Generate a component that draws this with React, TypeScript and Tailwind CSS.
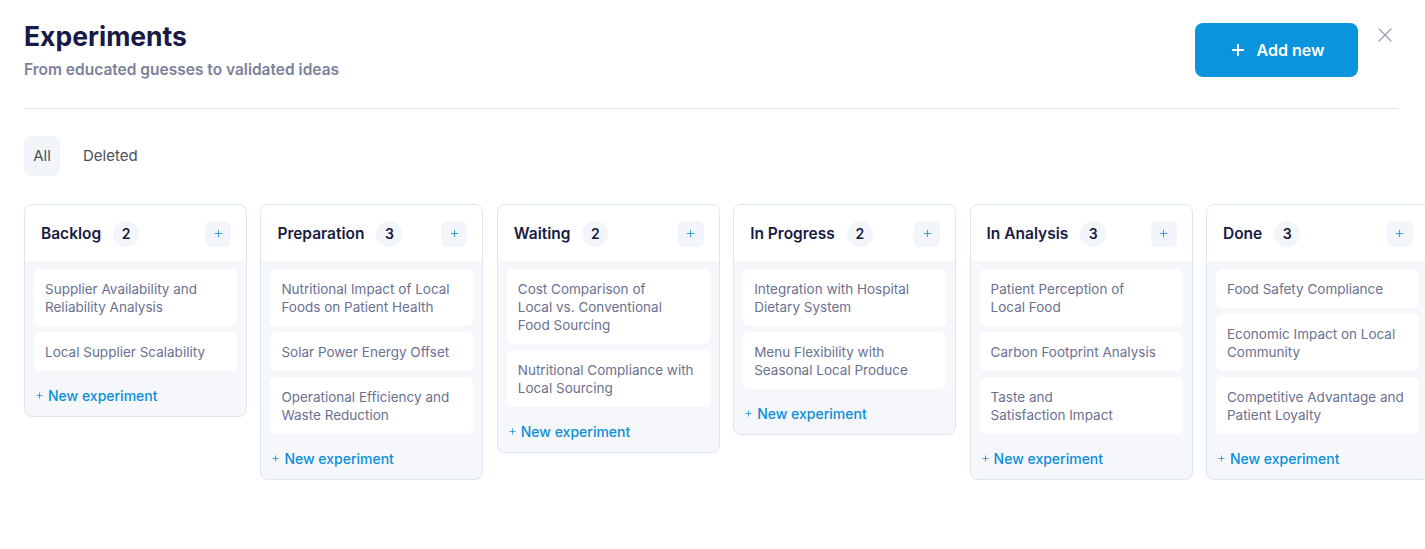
import React from "react";

type Col = { title: string; items: string[][] };

const columns: Col[] = [
  { title: "Backlog", items: [["Supplier Availability and", "Reliability Analysis"], ["Local Supplier Scalability"]] },
  {
    title: "Preparation",
    items: [
      ["Nutritional Impact of Local", "Foods on Patient Health"],
      ["Solar Power Energy Offset"],
      ["Operational Efficiency and", "Waste Reduction"],
    ],
  },
  {
    title: "Waiting",
    items: [
      ["Cost Comparison of", "Local vs. Conventional", "Food Sourcing"],
      ["Nutritional Compliance with", "Local Sourcing"],
    ],
  },
  {
    title: "In Progress",
    items: [
      ["Integration with Hospital", "Dietary System"],
      ["Menu Flexibility with", "Seasonal Local Produce"],
    ],
  },
  {
    title: "In Analysis",
    items: [["Patient Perception of", "Local Food"], ["Carbon Footprint Analysis"], ["Taste and", "Satisfaction Impact"]],
  },
  {
    title: "Done",
    items: [
      ["Food Safety Compliance"],
      ["Economic Impact on Local", "Community"],
      ["Competitive Advantage and", "Patient Loyalty"],
    ],
  },
];

function Plus({ className, sw = 2 }: { className?: string; sw?: number }) {
  return (
    <svg viewBox="0 0 24 24" className={className} fill="none" stroke="currentColor" strokeWidth={sw} strokeLinecap="round">
      <path d="M12 5v14M5 12h14" />
    </svg>
  );
}

function Column({ col }: { col: Col }) {
  return (
    <div className="w-[223px] shrink-0 rounded-[8px] border border-[#dbe7f3] bg-[#f5f7fa] overflow-hidden">
      <div className="h-[56px] bg-white flex items-center pl-[16px] pr-[15px] pt-[1px]">
        <span className="text-[15.5px] font-semibold text-[#171b42]">{col.title}</span>
        <span className="ml-[12px] w-[26px] h-[26px] rounded-full bg-[#f2f5f9] flex items-center justify-center text-[14px] font-semibold text-[#171b42]">
          {col.items.length}
        </span>
        <span className="ml-auto w-[26px] h-[26px] rounded-[6px] bg-[#f2f5f9] flex items-center justify-center text-[#2a93d8]">
          <Plus className="w-[11px] h-[11px]" sw={2} />
        </span>
      </div>
      <div className="px-[9px] pt-[8px] flex flex-col gap-[6px]">
        {col.items.map((lines, i) => (
          <div key={i} className="bg-white rounded-[6px] px-[11px] py-[10.5px] text-[13.5px] leading-[18px] text-[#6b7190] whitespace-nowrap">
            {lines.map((l, j) => (
              <div key={j}>{l}</div>
            ))}
          </div>
        ))}
      </div>
      <div className="mt-[14px] mb-[11px] h-[20px] flex items-center pl-[10px] text-[#0b8fd8]">
        <Plus className="w-[9px] h-[9px] mr-[4px]" sw={2} />
        <span className="text-[14px] font-medium">New experiment</span>
      </div>
    </div>
  );
}

export default function App() {
  return (
    <div className="w-[1425px] h-[549px] bg-white overflow-hidden" style={{ fontFamily: "Inter, 'Noto Sans', sans-serif" }}>
      <div className="pl-[24px] pr-[27px]">
        <div className="flex items-start pt-[23px] pb-[28px] border-b border-[#e6e9ef]">
          <div className="flex-1">
            <div className="text-[26.5px] leading-[28px] font-bold text-[#161a45] mt-[-1px]">Experiments</div>
            <div className="mt-[10px] text-[15.5px] leading-[20px] font-semibold text-[#7b8199]">
              From educated guesses to validated ideas
            </div>
          </div>
          <button className="w-[163px] h-[54px] rounded-[8px] bg-[#0994dd] flex items-center justify-center gap-[10px] text-white text-[16px] font-semibold">
            <Plus className="w-[18px] h-[18px]" sw={2.6} />
            Add new
          </button>
          <div className="ml-[19px] mr-[5px] mt-[4px] text-[#9aa0b3]">
            <svg viewBox="0 0 16 16" className="w-[16px] h-[16px]" fill="none" stroke="currentColor" strokeWidth={1.3} strokeLinecap="round">
              <path d="M2 2l12 12M14 2L2 14" />
            </svg>
          </div>
        </div>
        <div className="flex items-center mt-[27px] gap-[6px]">
          <div className="w-[36px] h-[40px] rounded-[6px] bg-[#f2f6fa] flex items-center justify-center text-[15px] text-[#4b4f5c]">
            All
          </div>
          <div className="px-[17px] h-[40px] flex items-center text-[15px] text-[#4b4f5c]">Deleted</div>
        </div>
      </div>
      <div className="mt-[28px] pl-[24px] flex items-start gap-[13.4px] overflow-hidden">
        {columns.map((c) => (
          <Column key={c.title} col={c} />
        ))}
      </div>
    </div>
  );
}
